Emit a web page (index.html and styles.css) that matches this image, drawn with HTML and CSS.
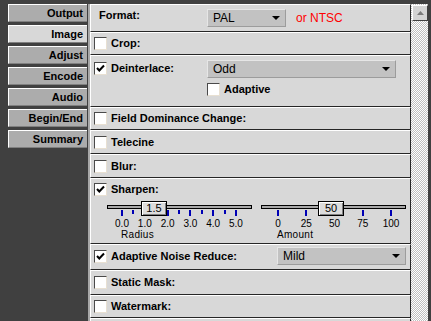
FILE: index.html
```html
<!DOCTYPE html>
<html>
<head>
<meta charset="utf-8">
<link rel="stylesheet" href="styles.css">
</head>
<body>
<div class="app">
  <nav class="tabs">
    <div class="tab">Output</div>
    <div class="tab active">Image</div>
    <div class="tab">Adjust</div>
    <div class="tab">Encode</div>
    <div class="tab">Audio</div>
    <div class="tab">Begin/End</div>
    <div class="tab">Summary</div>
  </nav>
  <main class="panel">
    <section class="row r-format">
      <span class="label format-label">Format:</span>
      <div class="select w-format"><span>PAL</span><svg class="arrow" width="8" height="4" viewBox="0 0 8 4"><polygon points="0,0 8,0 4,4" fill="#000"/></svg></div>
      <span class="ntsc">or NTSC</span>
    </section>
    <section class="row h23">
      <span class="cb"></span><span class="label">Crop:</span>
    </section>
    <section class="row r-deint">
      <div class="line head">
        <div class="lead"><span class="cb"><svg class="tick-mark" width="11" height="11" viewBox="0 0 11 11"><polyline points="2,5 4.3,7.5 9,2.5" fill="none" stroke="#000" stroke-width="2"/></svg></span><span class="label">Deinterlace:</span></div>
        <div class="select w-deint"><span>Odd</span><svg class="arrow" width="8" height="4" viewBox="0 0 8 4"><polygon points="0,0 8,0 4,4" fill="#000"/></svg></div>
      </div>
      <div class="line sub"><span class="cb"></span><span class="label">Adaptive</span></div>
    </section>
    <section class="row h23">
      <span class="cb"></span><span class="label">Field Dominance Change:</span>
    </section>
    <section class="row h24">
      <span class="cb"></span><span class="label">Telecine</span>
    </section>
    <section class="row h24">
      <span class="cb"></span><span class="label">Blur:</span>
    </section>
    <section class="row r-sharpen">
      <div class="line sh-head"><span class="cb"><svg class="tick-mark" width="11" height="11" viewBox="0 0 11 11"><polyline points="2,5 4.3,7.5 9,2.5" fill="none" stroke="#000" stroke-width="2"/></svg></span><span class="label">Sharpen:</span></div>
      <div class="sliders">
        <div class="slider radius">
          <div class="track"></div>
          <div class="ticks">
            <i class="t big"></i><i class="t"></i><i class="t big"></i><i class="t"></i><i class="t big"></i><i class="t"></i><i class="t big"></i><i class="t"></i><i class="t big"></i><i class="t"></i><i class="t big"></i>
          </div>
          <div class="scale"><span>0.0</span><span>1.0</span><span>2.0</span><span>3.0</span><span>4.0</span><span>5.0</span></div>
          <div class="caption">Radius</div>
          <div class="thumb" style="left:34px">1.5</div>
        </div>
        <div class="slider amount">
          <div class="track"></div>
          <div class="ticks">
            <i class="t big"></i><i class="t big"></i><i class="t big"></i><i class="t big"></i><i class="t big"></i>
          </div>
          <div class="scale"><span>0</span><span>25</span><span>50</span><span>75</span><span>100</span></div>
          <div class="caption">Amount</div>
          <div class="thumb" style="left:57px">50</div>
        </div>
      </div>
    </section>
    <section class="row r-anr">
      <span class="cb"><svg class="tick-mark" width="11" height="11" viewBox="0 0 11 11"><polyline points="2,5 4.3,7.5 9,2.5" fill="none" stroke="#000" stroke-width="2"/></svg></span><span class="label">Adaptive Noise Reduce:</span>
      <div class="select w-anr"><span>Mild</span><svg class="arrow" width="8" height="4" viewBox="0 0 8 4"><polygon points="0,0 8,0 4,4" fill="#000"/></svg></div>
    </section>
    <section class="row h25">
      <span class="cb"></span><span class="label">Static Mask:</span>
    </section>
    <section class="row h23">
      <span class="cb"></span><span class="label">Watermark:</span>
    </section>
    <section class="row h23"></section>
  </main>
  <aside class="scrollbar">
    <div class="sb-up"><svg width="7" height="4" viewBox="0 0 7 4"><polygon points="3.5,0 7,4 0,4" fill="#7a7a7a"/></svg></div>
  </aside>
</div>
</body>
</html>
```
FILE: styles.css
```css
* { box-sizing: border-box; }
html, body { margin: 0; padding: 0; }
body {
  background: #404040;
  width: 431px;
  height: 321px;
  overflow: hidden;
  font-family: "Liberation Sans", Arial, sans-serif;
  color: #000;
}
.app { display: flex; height: 321px; padding-top: 4px; }

.tabs {
  width: 88px; flex: none; padding-left: 8px;
  display: flex; flex-direction: column; gap: 3px;
}
.tab {
  width: 79px; height: 18px;
  background: #acacac;
  border-top: 1px solid #fff;
  border-left: 1px solid #fff;
  border-bottom: 1px solid #808080;
  font-weight: bold; font-size: 11px; line-height: 17px;
  text-align: right; padding-right: 4px;
}
.tab.active { background: #d8d8d8; }

.panel {
  width: 323px; flex: none;
  background: #a8a8a8;
  padding-left: 2px;
  display: flex; flex-direction: column;
  overflow: hidden;
}
.row {
  flex: none;
  display: flex; align-items: center;
  background: #d8d8d8;
  border-top: 1px solid #fff;
  border-left: 1px solid #fff;
  border-bottom: 1px solid #262626;
  border-right: 1px solid #262626;
  padding-left: 3px;
}
.h23 { height: 23px; }
.h24 { height: 24px; }
.h25 { height: 25px; }

.label { font-weight: bold; font-size: 11px; line-height: 13px; white-space: nowrap; }
.cb + .label { margin-left: 4px; }

.cb {
  width: 13px; height: 13px; flex: none;
  background: #fff;
  border: 1px solid;
  border-color: #4a4a4a #e8e0d2 #e8e0d2 #4a4a4a;
  display: flex; align-items: center; justify-content: center;
}
.tick-mark { display: block; }

.select {
  height: 18px;
  display: flex; align-items: center; justify-content: space-between;
  background: #c2c2c2;
  border: 1px solid;
  border-color: #e6e6e6 #9c9c9c #9c9c9c #e6e6e6;
  padding: 0 5px 0 5px;
  font-size: 12px;
}
.arrow { display: block; }

/* Format row */
.r-format { height: 28px; align-items: center; padding-left: 8px; }
.format-label { width: 108px; align-self: flex-start; margin-top: 4px; }
.w-format { width: 79px; }
.ntsc { color: #ff0000; font-size: 12px; margin-left: 10px; }

/* Deinterlace */
.r-deint { height: 52px; flex-direction: column; align-items: stretch; }
.line { display: flex; align-items: center; }
.head { height: 25px; }
.lead { width: 113px; display: flex; align-items: center; }
.w-deint { width: 189px; }
.sub { height: 17px; padding-left: 113px; }

/* Sharpen */
.r-sharpen { height: 66px; flex-direction: column; align-items: stretch; justify-content: flex-start; }
.sh-head { height: 21px; }
.sliders { display: flex; gap: 9px; margin-left: 13px; margin-top: 1px; }
.slider { position: relative; width: 145px; }
.track {
  margin-top: 4px; height: 4px;
  border: 1px solid #000;
  background: #a8a8a8;
}
.ticks {
  height: 7px; margin-top: 1px;
  display: flex; justify-content: space-between; align-items: flex-start;
}
.radius .ticks { margin-left: 14px; width: 116px; }
.amount .ticks { margin-left: 16px; width: 115px; }
.t { display: block; width: 2px; height: 4px; background: #0000b4; }
.t.big { height: 6px; }
.scale {
  display: flex; justify-content: space-between;
  font-size: 10px; line-height: 10px; margin-top: 2px;
}
.scale span { width: 20px; text-align: center; }
.radius .scale { margin-left: 5px; width: 134px; }
.amount .scale { margin-left: 7px; width: 133px; }
.caption { font-size: 10px; line-height: 10px; margin-top: 1px; letter-spacing: 0.3px; }
.radius .caption { margin-left: 14px; }
.amount .caption { margin-left: 16px; }
.thumb {
  position: absolute; top: 0;
  width: 26px; height: 15px;
  background: #dcdcdc;
  border: 1px solid #000;
  box-shadow: inset 1px 1px #fff, inset -1px -1px #808080;
  font-size: 11px; line-height: 12px; text-align: center;
}

/* Adaptive noise reduce */
.r-anr { height: 26px; padding-bottom: 2px; }
.w-anr { width: 129px; margin-left: auto; margin-right: 4px; }

/* Scrollbar */
.scrollbar {
  width: 17px; flex: none;
  background: repeating-conic-gradient(#ffffff 0 25%, #c0c0c0 0 50%) 0 0 / 2px 2px;
  padding: 1px 0 0 1px;
}
.sb-up {
  width: 16px; height: 16px;
  background: #d4d4d4;
  border-top: 1px solid #fff;
  border-left: 1px solid #fff;
  border-right: 1px solid #404040;
  border-bottom: 1px solid #404040;
  display: flex; align-items: center; justify-content: center;
}
.sb-up svg { display: block; }
```
